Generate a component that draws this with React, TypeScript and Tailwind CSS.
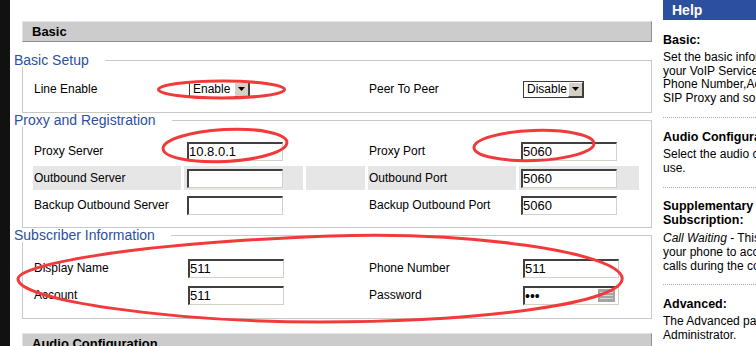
import React from "react";

function Select({ value, cls }: { value: string; cls: string }) {
  return (
    <div className={`flex h-[17px] w-[61px] border border-[#3c3c3c] bg-white ${cls}`}>
      <span className="flex-1 pl-[3px] text-[12px] leading-[15px] text-black">{value}</span>
      <span className="flex w-[15px] items-center justify-center border border-t-white border-l-white border-b-[#404040] border-r-[#404040] bg-[#d4d0c8]">
        <svg width="7" height="4" viewBox="0 0 7 4">
          <path d="M0 0h7L3.5 4z" fill="#000" />
        </svg>
      </span>
    </div>
  );
}

function Field({ value, cls, password }: { value: string; cls: string; password?: boolean }) {
  return (
    <div className={`flex h-[19px] w-[96px] items-center border-t-2 border-l-2 border-r border-b border-t-[#404040] border-l-[#404040] border-r-[#d4d0c8] border-b-[#d4d0c8] bg-white ${cls}`}>
      <span className={`flex-1 text-black ${password ? "text-[14px] leading-[14px]" : "text-[13px] leading-[16px]"}`}>{value}</span>
      {password && (
        <svg width="17" height="13" viewBox="0 0 17 13" className="mr-[3px]">
          <rect x="0" y="0" width="17" height="13" fill="#a4a4a4" />
          <rect x="2" y="3" width="13" height="1" fill="#d8d8d8" />
          <rect x="2" y="6" width="13" height="1" fill="#d8d8d8" />
          <rect x="2" y="9" width="13" height="1" fill="#d8d8d8" />
        </svg>
      )}
    </div>
  );
}

function Section({ title, children, cls }: { title: string; children: React.ReactNode; cls: string }) {
  return (
    <fieldset className="w-[630px] border border-[#c8c8c8]">
      <legend className="ml-[-9px] bg-white pr-[16px] text-[14px] leading-[14px] text-[#2c4f9e]">{title}</legend>
      <div className={`pl-[10px] ${cls}`}>
        <div className="grid grid-cols-[148px_119px_59px_148px_120px] auto-rows-[24px] gap-x-[3px] gap-y-[3px] text-[12px] text-black">
          {children}
        </div>
      </div>
    </fieldset>
  );
}

function Bar({ title }: { title: string }) {
  return (
    <div className="h-[21px] w-[630px] border border-t-[#e2e2e2] border-l-[#e2e2e2] border-b-[#8e8e8e] border-r-[#8e8e8e] bg-[#cccccc] pl-[9px] text-[13px] font-bold leading-[19px] text-black">
      {title}
    </div>
  );
}

const lab = "pl-[1px] leading-[24px]";
const cell = "flex items-center";

export default function App() {
  return (
    <div className="relative flex h-[346px] w-[756px] overflow-hidden bg-white font-['Liberation_Sans',Arial,sans-serif]">
      <div className="w-[10px] shrink-0 bg-[#111111]" />

      <div className="ml-[12px] w-[630px] shrink-0 pt-[21px]">
        <Bar title="Basic" />
        <div className="mt-[11px]">
          <Section title="Basic Setup" cls="pt-[10px] pb-[11px]">
            <span className={lab}>Line Enable</span>
            <div className={cell}><Select value="Enable" cls="ml-[5px]" /></div>
            <span />
            <span className={lab}>Peer To Peer</span>
            <div className={cell}><Select value="Disable" cls="ml-[4px]" /></div>
          </Section>
          <Section title="Proxy and Registration" cls="pt-[12px] pb-[10px]">
            <span className={lab}>Proxy Server</span>
            <div className={cell}><Field value="10.8.0.1" cls="ml-[3px]" /></div>
            <span />
            <span className={lab}>Proxy Port</span>
            <div className={cell}><Field value="5060" cls="ml-[2px]" /></div>

            <span className={`${lab} bg-[#e6e6e6]`}>Outbound Server</span>
            <div className={`${cell} bg-[#e6e6e6]`}><Field value="" cls="ml-[3px]" /></div>
            <span className="bg-[#e6e6e6]" />
            <span className={`${lab} bg-[#e6e6e6]`}>Outbound Port</span>
            <div className={`${cell} bg-[#e6e6e6]`}><Field value="5060" cls="ml-[2px]" /></div>

            <span className={lab}>Backup Outbound Server</span>
            <div className={cell}><Field value="" cls="ml-[3px]" /></div>
            <span />
            <span className={lab}>Backup Outbound Port</span>
            <div className={cell}><Field value="5060" cls="ml-[2px]" /></div>
          </Section>
          <Section title="Subscriber Information" cls="pt-[14px] pb-[11px]">
            <span className={lab}>Display Name</span>
            <div className={cell}><Field value="511" cls="ml-[4px]" /></div>
            <span />
            <span className={lab}>Phone Number</span>
            <div className={cell}><Field value="511" cls="ml-[4px]" /></div>

            <span className={lab}>Account</span>
            <div className={cell}><Field value="511" cls="ml-[4px]" /></div>
            <span />
            <span className={lab}>Password</span>
            <div className={cell}><Field value="•••" cls="ml-[4px]" password /></div>
          </Section>
        </div>
        <div className="mt-[14px]">
          <Bar title="Audio Configuration" />
        </div>
      </div>

      <div className="ml-[11px] min-w-0 flex-1 overflow-hidden whitespace-nowrap text-black">
        <div className="h-[20px] bg-[#2d4f9f] pl-[9px] text-[14px] font-bold leading-[20px] text-white">Help</div>

        <div className="border-b border-dotted border-[#aaaaaa] pt-[13px] pb-[11px]">
          <div className="text-[12.5px] font-bold leading-[14px]">Basic:</div>
          <div className="mt-[4px] text-[12px] leading-[13.7px]">
            Set the basic information about<br />
            your VoIP Service Provider, such as<br />
            Phone Number,Account,Password,<br />
            SIP Proxy and so on.
          </div>
        </div>

        <div className="border-b border-dotted border-[#aaaaaa] pt-[12px] pb-[12px]">
          <div className="text-[12.5px] font-bold leading-[14px]">Audio Configuration:</div>
          <div className="mt-[4px] text-[12px] leading-[13.7px]">
            Select the audio codecs you want to<br />
            use.
          </div>
        </div>

        <div className="border-b border-dotted border-[#aaaaaa] pt-[11px] pb-[11px]">
          <div className="text-[12.5px] font-bold leading-[14px]">
            Supplementary<br />
            Subscription:
          </div>
          <div className="mt-[5px] text-[12px] leading-[13.7px]">
            <i>Call Waiting</i> - This service allows<br />
            your phone to accept incoming<br />
            calls during the conversation.
          </div>
        </div>

        <div className="pt-[12px]">
          <div className="text-[12.5px] font-bold leading-[14px]">Advanced:</div>
          <div className="mt-[4px] text-[12px] leading-[13.7px]">
            The Advanced parameters are for<br />
            Administrator.
          </div>
        </div>
      </div>

      <svg className="pointer-events-none absolute inset-0" width="756" height="346" viewBox="0 0 756 346">
        <g fill="none" stroke="#f23a3a" strokeWidth="3">
          <ellipse cx="221.5" cy="89.5" rx="63" ry="8.5" />
          <ellipse cx="225" cy="145.5" rx="62" ry="16" transform="rotate(-3 225 145.5)" />
          <ellipse cx="534" cy="145.5" rx="60" ry="15" transform="rotate(-2 534 145.5)" />
          <path d="M18 279 C 18 266, 120 244, 330 236 C 470 231, 615 252, 622 277 C 628 303, 480 322, 320 322 C 170 322, 18 300, 18 279 Z" />
        </g>
      </svg>
    </div>
  );
}
